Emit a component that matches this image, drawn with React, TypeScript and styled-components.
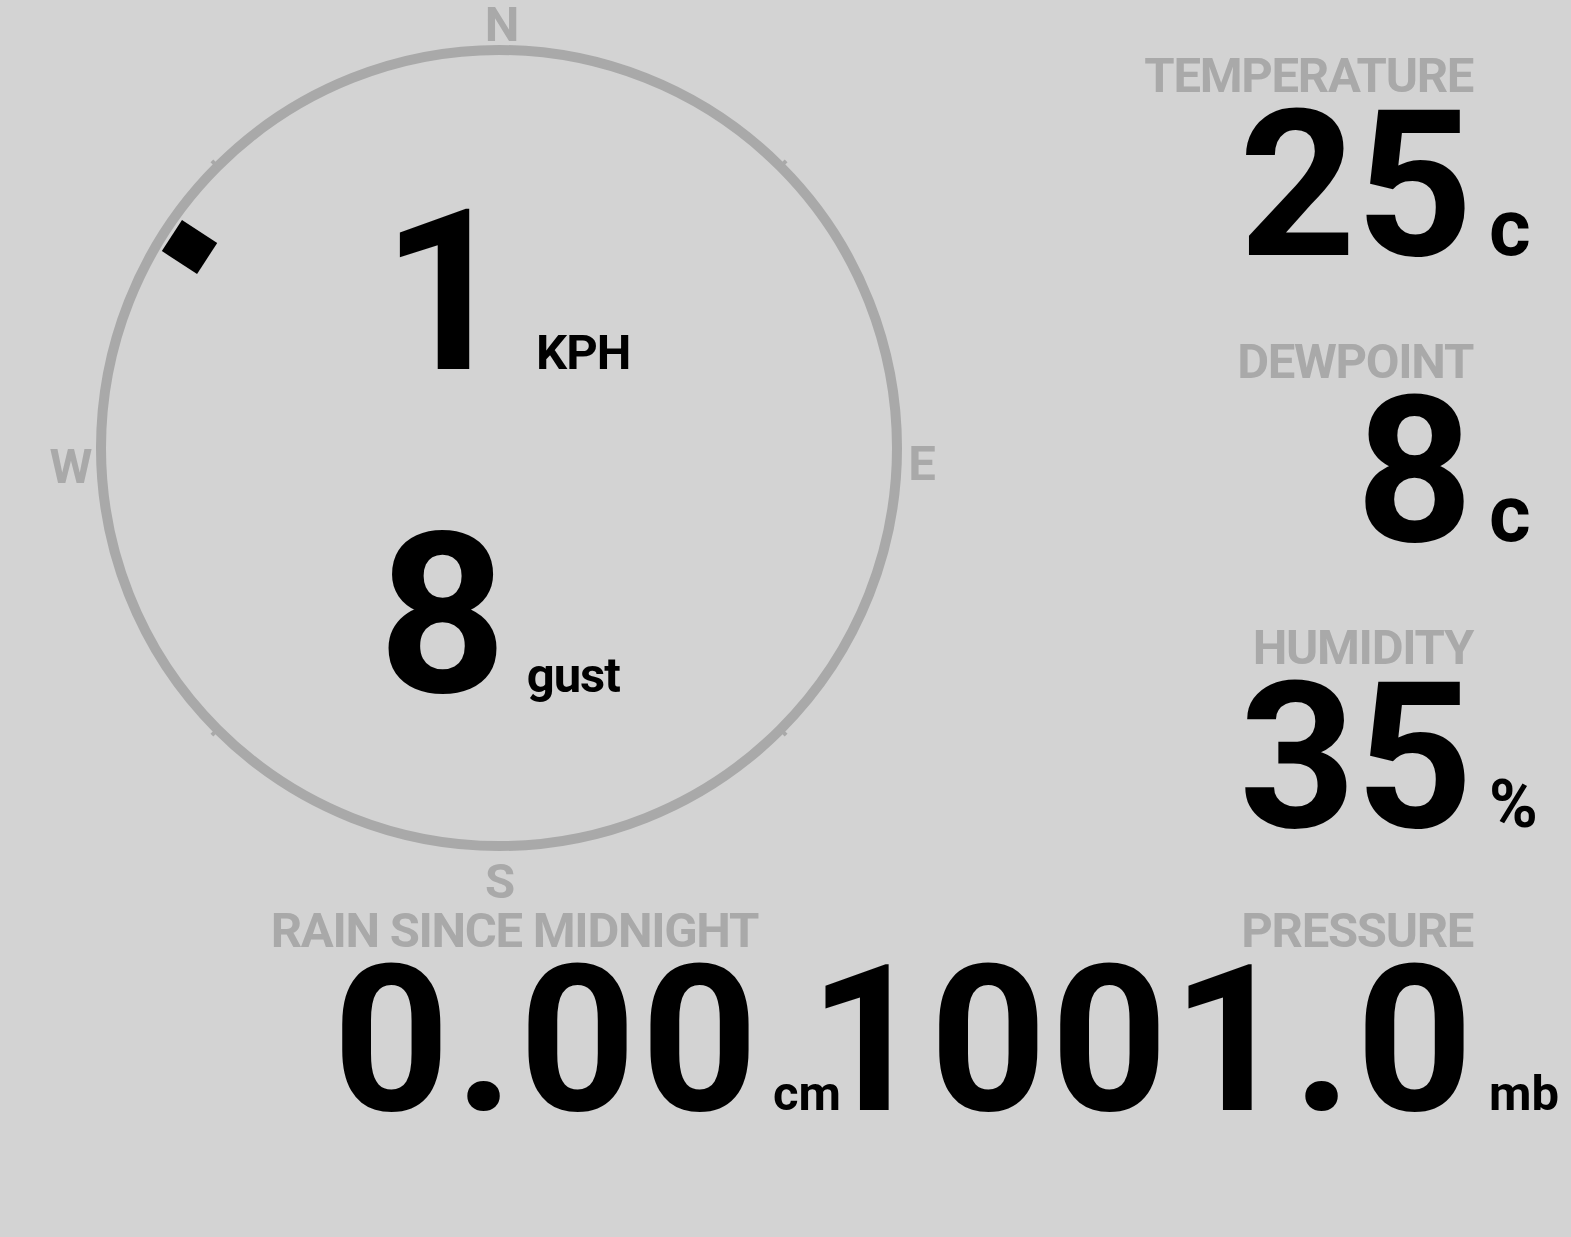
import React from 'react';
import styled, { createGlobalStyle } from 'styled-components';

const GlobalStyle = createGlobalStyle`
  html, body {
    margin: 0;
    padding: 0;
    background: #d3d3d3;
  }
  body {
    font-family: Roboto, 'Noto Sans', sans-serif;
    font-weight: 700;
    color: #000;
  }
`;

const Page = styled.div`
  width: 1571px;
  min-height: 1237px;
  display: flex;
  flex-direction: column;
`;

const TopRow = styled.div`
  display: flex;
  height: 905px;
`;

const BottomRow = styled.div`
  display: grid;
  grid-template-columns: 836px minmax(0, 1fr);
  align-items: start;
  padding-top: 1px;
`;

const Compass = styled.div`
  position: relative;
  width: 998px;
  height: 905px;
  flex: none;
`;

const Dial = styled.svg`
  position: absolute;
  inset: 0;
`;

const Cardinal = styled.span<{ $x: number; $y: number }>`
  position: absolute;
  left: ${({ $x }) => $x}px;
  top: ${({ $y }) => $y}px;
  transform: translate(-50%, -50%);
  font-size: 49px;
  line-height: 1;
  color: #a9a9a9;
`;

const Readouts = styled.div`
  position: relative;
  display: flex;
  flex-direction: column;
  align-items: center;
  gap: 99px;
  padding-top: 181px;
`;

const ReadoutRow = styled.div<{ $shift: number }>`
  display: flex;
  align-items: baseline;
  margin-left: ${({ $shift }) => $shift}px;
`;

const BigValue = styled.span`
  font-size: 224px;
  line-height: 1;
`;

const SmallUnit = styled.span<{ $gap: number }>`
  font-size: 49px;
  line-height: 1;
  letter-spacing: -1px;
  margin-left: ${({ $gap }) => $gap}px;
`;

const StatsColumn = styled.div`
  flex: 1;
  display: flex;
  flex-direction: column;
  align-items: flex-end;
  gap: 69px;
  padding-top: 51px;
`;

const StatGrid = styled.div<{ $unitWidth: number }>`
  display: grid;
  grid-template-columns: auto ${({ $unitWidth }) => $unitWidth}px;
  grid-template-areas:
    'label .'
    'value unit';
  row-gap: 4px;
  align-items: baseline;
  justify-self: end;
`;

const StatLabel = styled.div`
  grid-area: label;
  justify-self: end;
  font-size: 49px;
  line-height: 1;
  letter-spacing: -1.3px;
  color: #a9a9a9;
  white-space: nowrap;
`;

const StatValue = styled.div<{ $track: number }>`
  grid-area: value;
  justify-self: end;
  font-size: 204px;
  line-height: 0.8;
  letter-spacing: ${({ $track }) => $track}px;
  margin-right: ${({ $track }) => -$track}px;
  white-space: nowrap;
`;

const StatUnit = styled.div<{ $size: number; $pad: number }>`
  grid-area: unit;
  font-size: ${({ $size }) => $size}px;
  line-height: 1;
  padding-left: ${({ $pad }) => $pad}px;
  white-space: nowrap;
`;

interface StatProps {
  label: string;
  value: string;
  unit: string;
  unitSize?: number;
  unitWidth?: number;
  unitPad?: number;
  track?: number;
}

const Stat: React.FC<StatProps> = ({
  label,
  value,
  unit,
  unitSize = 49,
  unitWidth = 98,
  unitPad = 16,
  track = 0,
}) => (
  <StatGrid $unitWidth={unitWidth}>
    <StatLabel>{label}</StatLabel>
    <StatValue $track={track}>{value}</StatValue>
    <StatUnit $size={unitSize} $pad={unitPad}>
      {unit}
    </StatUnit>
  </StatGrid>
);

const CX = 499;
const CY = 448;
const R = 398;

const WindDial: React.FC<{ bearing: number }> = ({ bearing }) => (
  <Dial width={998} height={905} viewBox="0 0 998 905">
    <circle cx={CX} cy={CY} r={R} fill="none" stroke="#a9a9a9" strokeWidth={10} />
    {[45, 135, 225, 315].map((a) => (
      <line
        key={a}
        x1={0}
        y1={-R + 4}
        x2={0}
        y2={-R - 8}
        stroke="#a9a9a9"
        strokeWidth={4}
        transform={`translate(${CX} ${CY}) rotate(${a})`}
      />
    ))}
    <g transform={`translate(${CX} ${CY}) rotate(${bearing})`}>
      <rect x={-18.5} y={-390} width={37} height={42} fill="#000" />
    </g>
  </Dial>
);

export default function App() {
  return (
    <>
      <GlobalStyle />
      <Page>
        <TopRow>
          <Compass>
            <WindDial bearing={303} />
            <Cardinal $x={502} $y={24}>N</Cardinal>
            <Cardinal $x={922} $y={463}>E</Cardinal>
            <Cardinal $x={500} $y={881}>S</Cardinal>
            <Cardinal $x={71} $y={466}>W</Cardinal>
            <Readouts>
              <ReadoutRow $shift={14}>
                <BigValue>1</BigValue>
                <SmallUnit $gap={26}>KPH</SmallUnit>
              </ReadoutRow>
              <ReadoutRow $shift={0}>
                <BigValue>8</BigValue>
                <SmallUnit $gap={20}>gust</SmallUnit>
              </ReadoutRow>
            </Readouts>
          </Compass>
          <StatsColumn>
            <Stat label="TEMPERATURE" value="25" unit="c" unitSize={80} />
            <Stat label="DEWPOINT" value="8" unit="c" unitSize={80} />
            <Stat label="HUMIDITY" value="35" unit="%" unitSize={66} />
          </StatsColumn>
        </TopRow>
        <BottomRow>
          <Stat
            label="RAIN SINCE MIDNIGHT"
            value="0.00"
            unit="cm"
            unitWidth={78}
            unitPad={15}
            track={5}
          />
          <Stat label="PRESSURE" value="1001.0" unit="mb" track={4} />
        </BottomRow>
      </Page>
    </>
  );
}
